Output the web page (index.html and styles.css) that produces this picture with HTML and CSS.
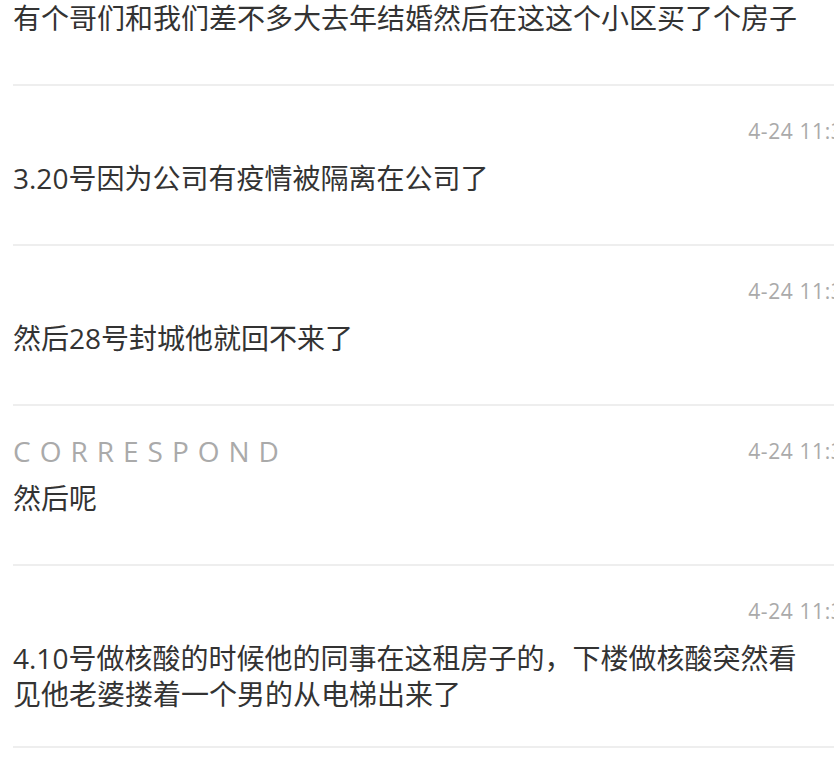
FILE: index.html
```html
<!DOCTYPE html>
<html lang="zh-CN">
<head>
<meta charset="utf-8">
<title>聊天记录</title>
<link rel="stylesheet" href="styles.css">
</head>
<body>
<div class="list">
  <div class="row first">
    <p class="msg">有个哥们和我们差不多大去年结婚然后在这这个小区买了个房子</p>
  </div>
  <div class="row">
    <div class="head"><span class="label"></span><span class="time">4-24 11:32</span></div>
    <p class="msg">3.20号因为公司有疫情被隔离在公司了</p>
  </div>
  <div class="row">
    <div class="head"><span class="label"></span><span class="time">4-24 11:32</span></div>
    <p class="msg">然后28号封城他就回不来了</p>
  </div>
  <div class="row">
    <div class="head"><span class="label">CORRESPOND</span><span class="time">4-24 11:32</span></div>
    <p class="msg">然后呢</p>
  </div>
  <div class="row">
    <div class="head"><span class="label"></span><span class="time">4-24 11:33</span></div>
    <p class="msg">4.10号做核酸的时候他的同事在这租房子的，下楼做核酸突然看见他老婆搂着一个男的从电梯出来了</p>
  </div>
</div>
</body>
</html>
```

FILE: styles.css
```css
html, body {
  margin: 0;
  padding: 0;
  overflow: hidden;
  background: #ffffff;
}
body {
  font-family: "Open Sans", "Noto Sans CJK SC", sans-serif;
  color: #333333;
}
.list {
  margin-left: 13px;
  width: 843px;
}
.row {
  padding: 24px 0 34px 0;
  border-bottom: 2px solid #eeeeee;
}
.row.first {
  padding-top: 0;
}
.head {
  display: flex;
  align-items: center;
  justify-content: space-between;
  height: 42px;
}
.label {
  font-size: 28px;
  letter-spacing: 9px;
  color: #aaaaaa;
  font-weight: 400;
}
.time {
  font-size: 21px;
  letter-spacing: 0.6px;
  color: #aaaaaa;
  white-space: nowrap;
}
.msg {
  margin: 8px 0 0 0;
  width: 800px;
  font-size: 28px;
  line-height: 36px;
  min-height: 50px;
  color: #333333;
}
.row.first .msg {
  margin-top: 0;
}
```
